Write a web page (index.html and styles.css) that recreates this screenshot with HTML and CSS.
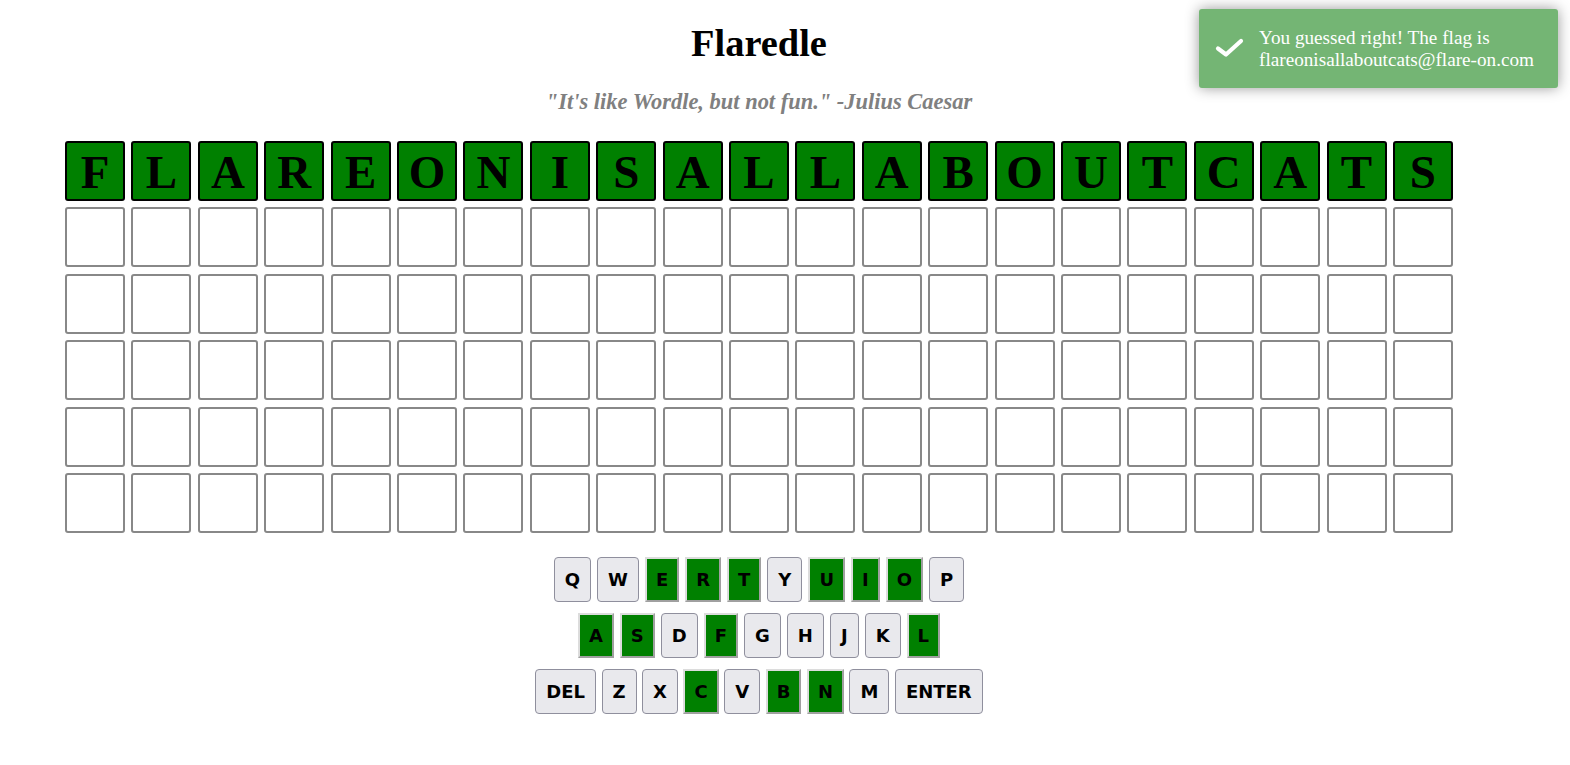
FILE: index.html
```html
<!DOCTYPE html>
<html>
<head>
<meta charset="utf-8">
<title>Flaredle</title>
<link rel="stylesheet" href="styles.css">
</head>
<body>
<div class="page">
  <h1 class="title">Flaredle</h1>
  <p class="quote">"It's like Wordle, but not fun." -Julius Caesar</p>

  <div class="board">
    <div class="row">
      <div class="tile hit">F</div><div class="tile hit">L</div><div class="tile hit">A</div><div class="tile hit">R</div><div class="tile hit">E</div><div class="tile hit">O</div><div class="tile hit">N</div><div class="tile hit">I</div><div class="tile hit">S</div><div class="tile hit">A</div><div class="tile hit">L</div><div class="tile hit">L</div><div class="tile hit">A</div><div class="tile hit">B</div><div class="tile hit">O</div><div class="tile hit">U</div><div class="tile hit">T</div><div class="tile hit">C</div><div class="tile hit">A</div><div class="tile hit">T</div><div class="tile hit">S</div>
    </div>
    <div class="row">
      <div class="tile"></div><div class="tile"></div><div class="tile"></div><div class="tile"></div><div class="tile"></div><div class="tile"></div><div class="tile"></div><div class="tile"></div><div class="tile"></div><div class="tile"></div><div class="tile"></div><div class="tile"></div><div class="tile"></div><div class="tile"></div><div class="tile"></div><div class="tile"></div><div class="tile"></div><div class="tile"></div><div class="tile"></div><div class="tile"></div><div class="tile"></div>
    </div>
    <div class="row">
      <div class="tile"></div><div class="tile"></div><div class="tile"></div><div class="tile"></div><div class="tile"></div><div class="tile"></div><div class="tile"></div><div class="tile"></div><div class="tile"></div><div class="tile"></div><div class="tile"></div><div class="tile"></div><div class="tile"></div><div class="tile"></div><div class="tile"></div><div class="tile"></div><div class="tile"></div><div class="tile"></div><div class="tile"></div><div class="tile"></div><div class="tile"></div>
    </div>
    <div class="row">
      <div class="tile"></div><div class="tile"></div><div class="tile"></div><div class="tile"></div><div class="tile"></div><div class="tile"></div><div class="tile"></div><div class="tile"></div><div class="tile"></div><div class="tile"></div><div class="tile"></div><div class="tile"></div><div class="tile"></div><div class="tile"></div><div class="tile"></div><div class="tile"></div><div class="tile"></div><div class="tile"></div><div class="tile"></div><div class="tile"></div><div class="tile"></div>
    </div>
    <div class="row">
      <div class="tile"></div><div class="tile"></div><div class="tile"></div><div class="tile"></div><div class="tile"></div><div class="tile"></div><div class="tile"></div><div class="tile"></div><div class="tile"></div><div class="tile"></div><div class="tile"></div><div class="tile"></div><div class="tile"></div><div class="tile"></div><div class="tile"></div><div class="tile"></div><div class="tile"></div><div class="tile"></div><div class="tile"></div><div class="tile"></div><div class="tile"></div>
    </div>
    <div class="row">
      <div class="tile"></div><div class="tile"></div><div class="tile"></div><div class="tile"></div><div class="tile"></div><div class="tile"></div><div class="tile"></div><div class="tile"></div><div class="tile"></div><div class="tile"></div><div class="tile"></div><div class="tile"></div><div class="tile"></div><div class="tile"></div><div class="tile"></div><div class="tile"></div><div class="tile"></div><div class="tile"></div><div class="tile"></div><div class="tile"></div><div class="tile"></div>
    </div>
  </div>

  <div class="keyboard">
    <div class="krow">
      <button class="key">Q</button><button class="key">W</button><button class="key used">E</button><button class="key used">R</button><button class="key used">T</button><button class="key">Y</button><button class="key used">U</button><button class="key used">I</button><button class="key used">O</button><button class="key">P</button>
    </div>
    <div class="krow">
      <button class="key used">A</button><button class="key used">S</button><button class="key">D</button><button class="key used">F</button><button class="key">G</button><button class="key">H</button><button class="key">J</button><button class="key">K</button><button class="key used">L</button>
    </div>
    <div class="krow tight">
      <button class="key">DEL</button><button class="key">Z</button><button class="key">X</button><button class="key used">C</button><button class="key">V</button><button class="key used">B</button><button class="key used">N</button><button class="key">M</button><button class="key">ENTER</button>
    </div>
  </div>
</div>

<div class="toast">
  <svg class="toast-icon" width="32" height="24" viewBox="0 0 32 24"><polyline points="4,12.5 12,18.5 27,5" fill="none" stroke="#fff" stroke-width="4.2" stroke-linecap="round" stroke-linejoin="round"/></svg>
  <div class="toast-msg">You guessed right! The flag is flareonisallaboutcats@flare-on.com</div>
</div>
</body>
</html>
```

FILE: styles.css
```css
html, body {
  margin: 0;
  padding: 0;
  background: #fff;
}

body {
  font-family: "Liberation Serif", "Times New Roman", serif;
  color: #000;
}

.page {
  width: 1518px;
  display: flex;
  flex-direction: column;
  align-items: center;
}

.title {
  margin: 21px 0 0;
  font-size: 38.4px;
  line-height: 44px;
  font-weight: bold;
}

.quote {
  margin: 24px 0 0;
  font-size: 22.46px;
  line-height: 26px;
  font-weight: bold;
  font-style: italic;
  color: #808080;
}

.board {
  margin-top: 26px;
  display: flex;
  flex-direction: column;
  gap: 6.4px;
}

.row {
  display: flex;
  gap: 6.4px;
}

.tile {
  box-sizing: border-box;
  width: 60px;
  height: 60px;
  border: 2px solid #888;
  border-radius: 3px;
  display: flex;
  align-items: center;
  justify-content: center;
  font-size: 47px;
  font-weight: bold;
  line-height: 1;
  padding-top: 3px;
}

.tile.hit {
  background: #008000;
  border-color: #000;
}

.keyboard {
  margin-top: 24px;
  display: flex;
  flex-direction: column;
  gap: 10.5px;
  align-items: center;
}

.krow {
  display: flex;
  gap: 6px;
  justify-content: center;
}

.krow.tight {
  gap: 5.5px;
}

.key {
  box-sizing: border-box;
  height: 45.5px;
  padding: 0 10px;
  margin: 0;
  font-family: Verdana, "DejaVu Sans", sans-serif;
  font-size: 18px;
  font-weight: bold;
  color: #000;
  background: #e9e9ed;
  border: 1px solid #8f8f9d;
  border-radius: 4px;
  line-height: 1;
}

.key.used {
  background: #008000;
  padding: 0 9px;
  border: 2px solid;
  border-color: #dcdcdc #a0a0a0 #a0a0a0 #dcdcdc;
  border-radius: 0;
}

.toast {
  position: absolute;
  top: 9px;
  right: 12px;
  box-sizing: border-box;
  width: 359px;
  padding: 18px 18px 18px 60px;
  background: #74b574;
  color: #fff;
  border-radius: 3px;
  box-shadow: 0 0 14px #999;
  font-size: 19.2px;
  line-height: 21.5px;
}

.toast-icon {
  position: absolute;
  left: 15px;
  top: 50%;
  margin-top: -13px;
}

.toast-msg {
  text-align: left;
}
```
